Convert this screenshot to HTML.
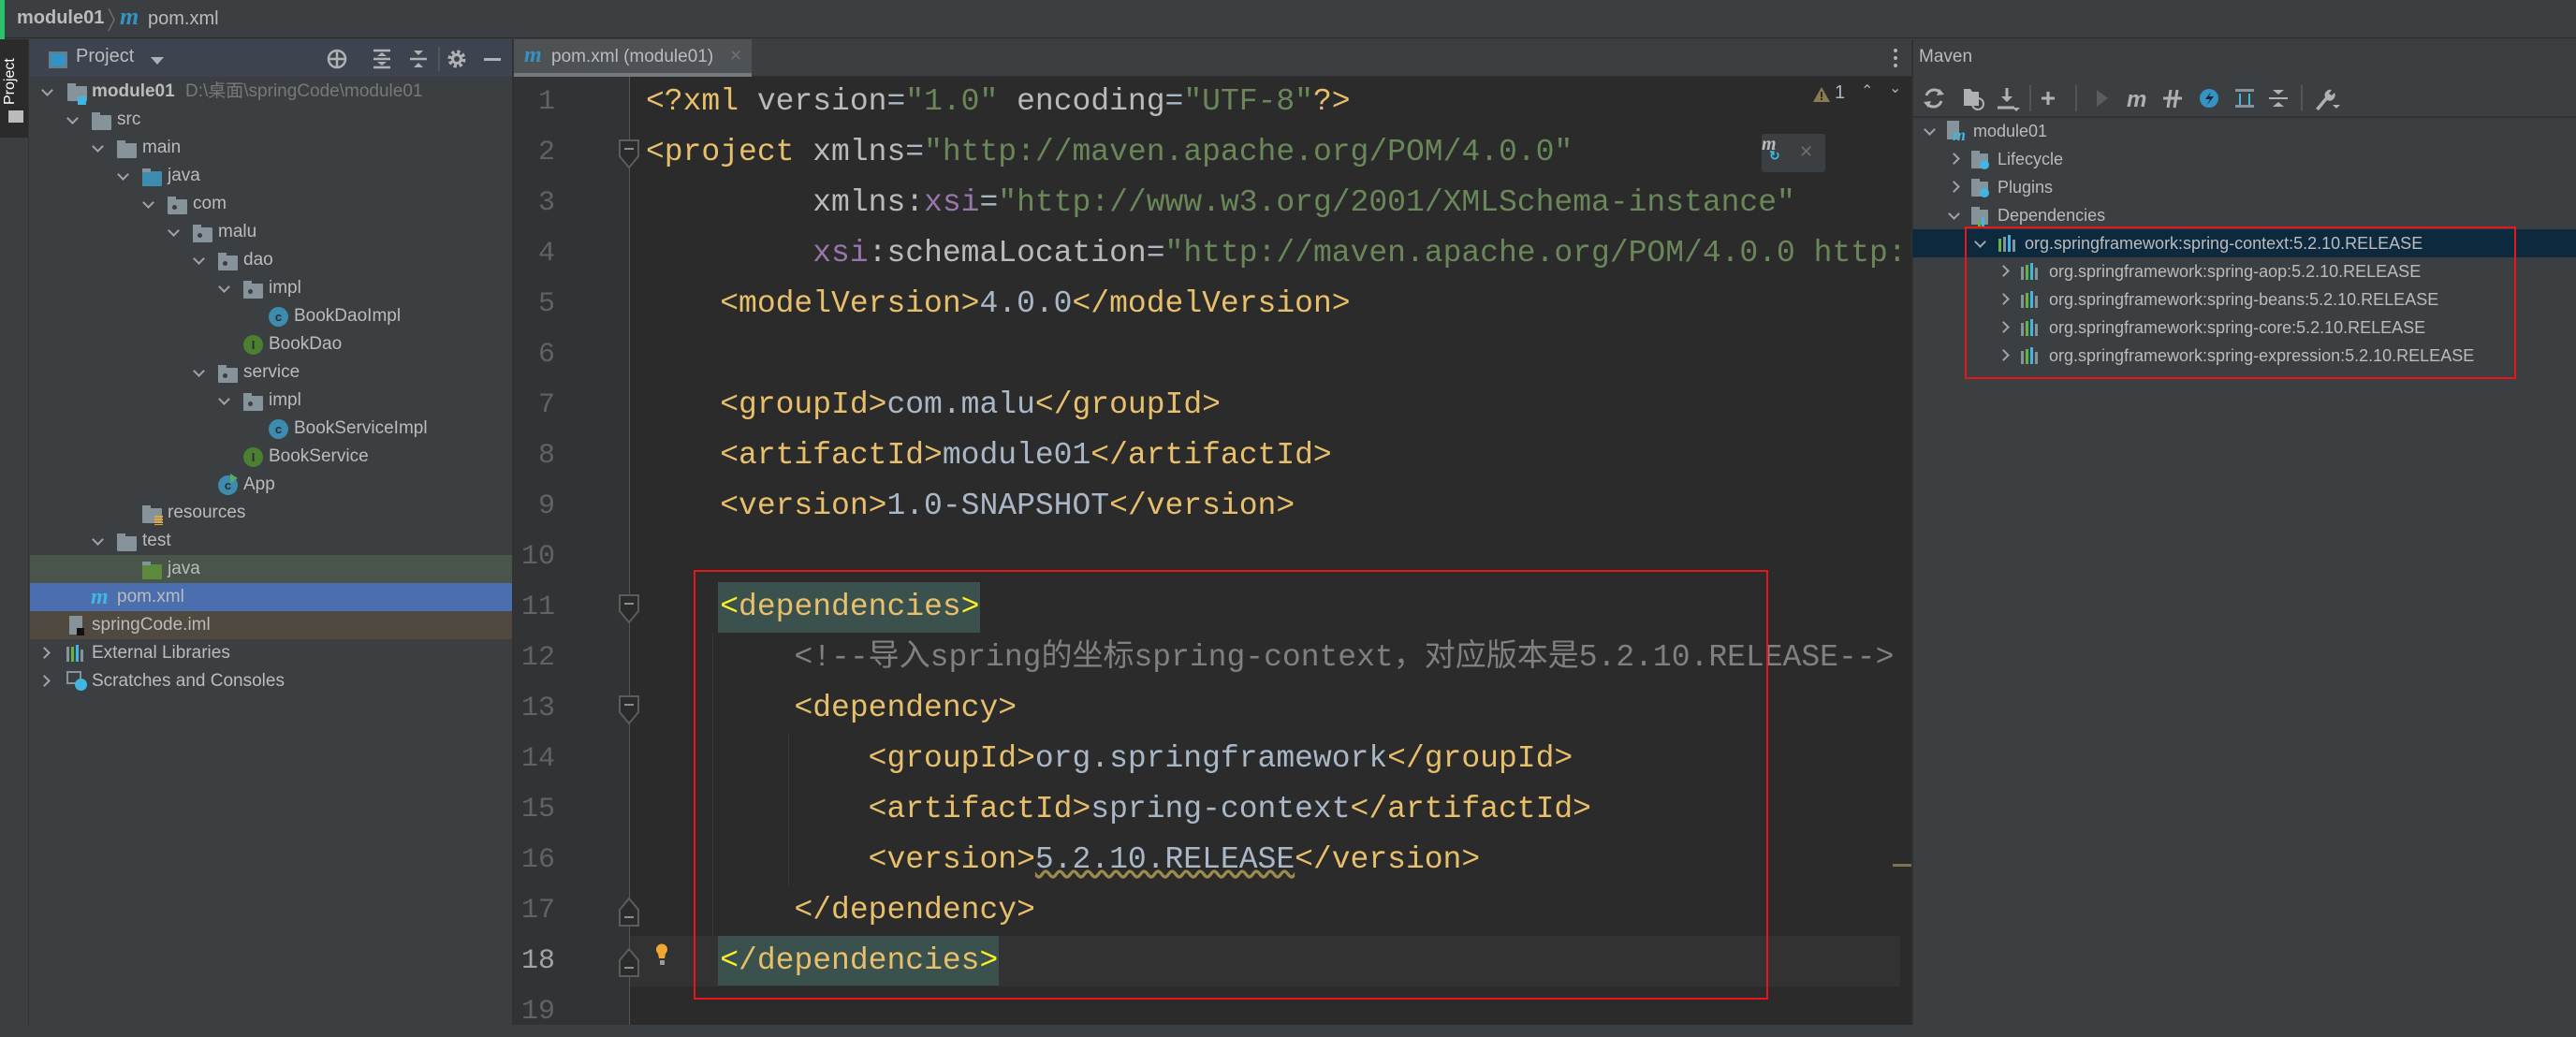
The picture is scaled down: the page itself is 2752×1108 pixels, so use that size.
<!DOCTYPE html>
<html><head><meta charset="utf-8">
<style>
*{margin:0;padding:0;box-sizing:border-box}
body{width:2752px;height:1095px;overflow:hidden;background:#3c3f41;position:relative;font-family:"Liberation Sans","Noto Sans CJK SC",sans-serif;color:#bbbbbb}
.a{position:absolute}
.row{position:absolute;left:32px;width:515px;height:30px;font-size:19px;line-height:30px;white-space:nowrap}
.chev{position:absolute;top:9px;width:9px;height:9px;border-right:2px solid #a0a4a8;border-bottom:2px solid #a0a4a8;transform:rotate(45deg)}
.chevr{position:absolute;top:10px;width:9px;height:9px;border-right:2px solid #a0a4a8;border-bottom:2px solid #a0a4a8;transform:rotate(-45deg)}
.fold{position:absolute;width:21px;height:16px;background:#87939a;border-radius:1px}
.fold:before{content:"";position:absolute;left:0;top:-3px;width:9px;height:4px;background:#87939a}
.pk:after{content:"";position:absolute;left:5px;top:6px;width:5px;height:5px;border-radius:50%;background:#3c3f41}
.ci{position:absolute;width:21px;height:21px;border-radius:50%;font-size:13px;line-height:21px;text-align:center;color:#2b2b2b;font-weight:bold}
.code{position:absolute;left:690px;font-family:"Liberation Mono","Noto Sans CJK SC",monospace;font-size:33px;line-height:54px;white-space:pre;color:#a9b7c6}
.ln{position:absolute;left:547px;width:46px;text-align:right;font-family:"Liberation Mono",monospace;font-size:30px;line-height:54px;color:#606366}
.t{color:#e8bf6a}.v{color:#6a8759}.p{color:#9876aa}.c{color:#808080}.at{color:#bababa}
.mrow{position:absolute;left:2043px;width:709px;height:30px;font-size:18px;line-height:30px;white-space:nowrap;color:#bbbbbb}
.lib{position:absolute;width:22px;height:18px}
.lib i{position:absolute;bottom:0;width:3px}
</style></head><body>
<!-- top bar -->
<div class="a" style="left:0;top:0;width:2752px;height:41px;background:#3c3f41;border-bottom:1px solid #2b2b2b"></div>
<div class="a" style="left:0;top:0;width:5px;height:76px;background:#29c46c"></div>
<div class="a" style="left:18px;top:8px;font-size:20px;font-weight:bold;color:#bbbbbb">module01</div>
<svg class="a" style="left:114px;top:8px" width="10" height="26"><path d="M2 1 L8 13 L2 25" fill="none" stroke="#6a6d70" stroke-width="1.5"/></svg>
<div class="a" style="left:128px;top:3px;font-size:26px;font-style:italic;font-weight:bold;color:#3592c4;font-family:'Liberation Serif',serif">m</div>
<div class="a" style="left:158px;top:9px;font-size:20px;color:#bbbbbb">pom.xml</div>

<!-- left stripe -->
<div class="a" style="left:0;top:42px;width:31px;height:1053px;background:#3c3f41;border-right:1px solid #323232"></div>
<div class="a" style="left:0;top:42px;width:30px;height:105px;background:#2b2b2b"></div>
<div class="a" style="left:2px;transform:rotate(-90deg);transform-origin:left top;font-size:16px;color:#fff;width:70px;top:112px">Project</div>
<div class="a" style="left:9px;top:118px;width:16px;height:13px;background:#bbbbbb"></div>

<!-- project panel -->
<div class="a" style="left:32px;top:42px;width:515px;height:40px;background:#3d4450"></div>
<div class="a" style="left:52px;top:55px;width:20px;height:18px;border:2px solid #6e7a85;background:#3592c4"></div>
<div class="a" style="left:81px;top:49px;font-size:20px;color:#bbbbbb">Project</div>
<div class="a" style="left:161px;top:61px;width:0;height:0;border-left:7px solid transparent;border-right:7px solid transparent;border-top:8px solid #afb1b3"></div>
<svg class="a" style="left:345px;top:48px" width="200" height="30" viewBox="0 0 200 30">
<g stroke="#afb1b3" stroke-width="2.5" fill="none"><circle cx="15" cy="15" r="9"/><line x1="15" y1="5" x2="15" y2="25"/><line x1="5" y1="15" x2="25" y2="15"/>
<line x1="54" y1="6" x2="72" y2="6"/><line x1="54" y1="24" x2="72" y2="24"/><line x1="54" y1="15" x2="72" y2="15"/>
<line x1="93" y1="15" x2="111" y2="15"/></g>
<g fill="#afb1b3"><path d="M58 12 L63 8 L68 12Z M58 18 L63 22 L68 18Z"/><path d="M97 6 L102 11 L107 6Z M97 24 L102 19 L107 24Z"/><rect x="172" y="14" width="18" height="3"/></g>
<line x1="124" y1="2" x2="124" y2="28" stroke="#555" stroke-width="2"/>
<circle cx="143" cy="15" r="7" fill="none" stroke="#afb1b3" stroke-width="5" stroke-dasharray="3 2.5"/><circle cx="143" cy="15" r="6" fill="#afb1b3"/><circle cx="143" cy="15" r="3" fill="#3d4450"/>
</svg>
<div class="a" style="left:547px;top:42px;width:2px;height:1053px;background:#323232"></div>

<!-- tree rows -->
<div class="row" style="top:83px"><span class="chev" style="left:14px"></span><span class="fold" style="left:40px;top:9px"></span><span class="a" style="left:51px;top:20px;width:9px;height:9px;background:#40b6e0"></span><b style="position:absolute;left:66px">module01</b><span style="position:absolute;left:166px;color:#787878">D:\桌面\springCode\module01</span></div>
<div class="row" style="top:113px"><span class="chev" style="left:41px"></span><span class="fold" style="left:66px;top:10px"></span><span style="position:absolute;left:93px">src</span></div>
<div class="row" style="top:143px"><span class="chev" style="left:68px"></span><span class="fold" style="left:93px;top:10px"></span><span style="position:absolute;left:120px">main</span></div>
<div class="row" style="top:173px"><span class="chev" style="left:95px"></span><span class="fold" style="left:120px;top:10px;background:#3d8cb0"></span><span style="position:absolute;left:147px">java</span></div>
<div class="row" style="top:203px"><span class="chev" style="left:122px"></span><span class="fold pk" style="left:147px;top:10px"></span><span style="position:absolute;left:174px">com</span></div>
<div class="row" style="top:233px"><span class="chev" style="left:149px"></span><span class="fold pk" style="left:174px;top:10px"></span><span style="position:absolute;left:201px">malu</span></div>
<div class="row" style="top:263px"><span class="chev" style="left:176px"></span><span class="fold pk" style="left:201px;top:10px"></span><span style="position:absolute;left:228px">dao</span></div>
<div class="row" style="top:293px"><span class="chev" style="left:203px"></span><span class="fold pk" style="left:228px;top:10px"></span><span style="position:absolute;left:255px">impl</span></div>
<div class="row" style="top:323px"><span class="ci" style="left:255px;top:5px;background:#3d8cb0">c</span><span style="position:absolute;left:282px">BookDaoImpl</span></div>
<div class="row" style="top:353px"><span class="ci" style="left:228px;top:5px;background:#4b8033">I</span><span style="position:absolute;left:255px">BookDao</span></div>
<div class="row" style="top:383px"><span class="chev" style="left:176px"></span><span class="fold pk" style="left:201px;top:10px"></span><span style="position:absolute;left:228px">service</span></div>
<div class="row" style="top:413px"><span class="chev" style="left:203px"></span><span class="fold pk" style="left:228px;top:10px"></span><span style="position:absolute;left:255px">impl</span></div>
<div class="row" style="top:443px"><span class="ci" style="left:255px;top:5px;background:#3d8cb0">c</span><span style="position:absolute;left:282px">BookServiceImpl</span></div>
<div class="row" style="top:473px"><span class="ci" style="left:228px;top:5px;background:#4b8033">I</span><span style="position:absolute;left:255px">BookService</span></div>
<div class="row" style="top:503px"><span class="ci" style="left:201px;top:5px;background:#3d8cb0">c</span><span class="a" style="left:214px;top:3px;width:0;height:0;border-top:5px solid transparent;border-bottom:5px solid transparent;border-left:8px solid #59a869"></span><span style="position:absolute;left:228px">App</span></div>
<div class="row" style="top:533px"><span class="fold" style="left:120px;top:10px"></span><span class="a" style="left:133px;top:18px;width:9px;height:10px;background:repeating-linear-gradient(#e6a43c 0 2px,transparent 2px 3px)"></span><span style="position:absolute;left:147px">resources</span></div>
<div class="row" style="top:563px"><span class="chev" style="left:68px"></span><span class="fold" style="left:93px;top:10px"></span><span style="position:absolute;left:120px">test</span></div>
<div class="row" style="top:593px;background:#49544a"><span class="fold" style="left:120px;top:10px;background:#5b8a3c"></span><span style="position:absolute;left:147px">java</span></div>
<div class="row" style="top:623px;background:#4b6eaf"><span style="position:absolute;left:65px;font-family:'Liberation Serif',serif;font-style:italic;font-weight:bold;color:#40b6e0;font-size:24px">m</span><span style="position:absolute;left:93px">pom.xml</span></div>
<div class="row" style="top:653px;background:#4f493f"><span class="a" style="left:42px;top:5px;width:14px;height:20px;background:#87939a"></span><span class="a" style="left:50px;top:18px;width:8px;height:8px;background:#111"></span><span style="position:absolute;left:66px">springCode.iml</span></div>
<div class="row" style="top:683px"><span class="chevr" style="left:11px"></span><span class="lib" style="left:39px;top:6px"><i style="left:0;height:16px;background:#87939a"></i><i style="left:5px;height:16px;background:#62b543"></i><i style="left:10px;height:18px;background:#40b6e0"></i><i style="left:15px;height:13px;background:#87939a"></i></span><span style="position:absolute;left:66px">External Libraries</span></div>
<div class="row" style="top:713px"><span class="chevr" style="left:11px"></span><span class="a" style="left:39px;top:4px;width:16px;height:14px;border:2px solid #87939a"></span><span class="a" style="left:48px;top:12px;width:13px;height:13px;border-radius:50%;background:#40b6e0"></span><span style="position:absolute;left:66px">Scratches and Consoles</span></div>

<!-- editor -->
<div class="a" style="left:549px;top:42px;width:1493px;height:40px;background:#3c3f41;border-bottom:1px solid #323232"></div>
<div class="a" style="left:549px;top:42px;width:254px;height:40px;background:#4e5254;border-bottom:4px solid #747a80"></div>
<div class="a" style="left:560px;top:46px;font-family:'Liberation Serif',serif;font-style:italic;font-weight:bold;color:#3592c4;font-size:24px">m</div>
<div class="a" style="left:589px;top:50px;font-size:19px;color:#bbbbbb">pom.xml (module01)</div>
<div class="a" style="left:779px;top:50px;font-size:17px;color:#6e6e6e">✕</div>
<div class="a" style="left:2023px;top:52px;width:4px;height:4px;background:#afb1b3;border-radius:2px;box-shadow:0 8px 0 #afb1b3,0 16px 0 #afb1b3"></div>

<div class="a" style="left:549px;top:82px;width:1493px;height:1013px;background:#2b2b2b"></div>
<div class="a" style="left:549px;top:82px;width:123px;height:1013px;background:#313335"></div>
<div class="a" style="left:672px;top:82px;width:1px;height:1013px;background:#555"></div>
<div class="a" style="left:673px;top:1000px;width:1369px;height:54px;background:#323232"></div>

<!-- line numbers -->
<div class="ln" style="top:82px">1<br>2<br>3<br>4<br>5<br>6<br>7<br>8<br>9<br>10<br>11<br>12<br>13<br>14<br>15<br>16<br>17<br><span style="color:#a4a3a3">18</span><br>19</div>

<!-- fold markers -->
<svg class="a" style="left:660px;top:82px" width="60" height="1013">
<g fill="#2b2b2b" stroke="#5a5d60" stroke-width="2">
<path d="M2 68 H22 V85 L12 97 L2 85Z"/>
<path d="M2 554 H22 V571 L12 583 L2 571Z"/>
<path d="M2 662 H22 V679 L12 691 L2 679Z"/>
<path d="M2 890 L12 878 L22 890 V907 H2Z"/>
<path d="M2 944 L12 932 L22 944 V961 H2Z"/>
</g>
<g stroke="#8a8d90" stroke-width="2"><line x1="7" y1="77" x2="17" y2="77"/><line x1="7" y1="563" x2="17" y2="563"/><line x1="7" y1="671" x2="17" y2="671"/><line x1="7" y1="898" x2="17" y2="898"/><line x1="7" y1="952" x2="17" y2="952"/></g>
<path d="M43 937 a6 6 0 1 1 8 0 l-1 5 h-6z" fill="#f0a732"/><rect x="45" y="944" width="5" height="5" fill="#999"/>
</svg>

<!-- tag highlight -->
<div class="a" style="left:767px;top:622px;width:280px;height:54px;background:#3b514d"></div>
<div class="a" style="left:767px;top:1000px;width:300px;height:53px;background:#3b514d"></div>
<div class="a" style="left:761px;top:676px;width:1px;height:324px;background:#3a3a3a"></div>
<div class="a" style="left:842px;top:784px;width:1px;height:162px;background:#3a3a3a"></div>

<div class="code" style="top:82px"><span class="t">&lt;?xml </span><span class="at">version</span>=<span class="v">"1.0"</span> <span class="at">encoding</span>=<span class="v">"UTF-8"</span><span class="t">?&gt;</span>
<span class="t">&lt;project </span><span class="at">xmlns</span>=<span class="v">"http://maven.apache.org/POM/4.0.0"</span>
         <span class="at">xmlns:</span><span class="p">xsi</span>=<span class="v">"http://www.w3.org/2001/XMLSchema-instance"</span>
         <span class="p">xsi</span><span class="at">:schemaLocation</span>=<span class="v">"http://maven.apache.org/POM/4.0.0 http:</span>
    <span class="t">&lt;modelVersion&gt;</span>4.0.0<span class="t">&lt;/modelVersion&gt;</span>

    <span class="t">&lt;groupId&gt;</span>com.malu<span class="t">&lt;/groupId&gt;</span>
    <span class="t">&lt;artifactId&gt;</span>module01<span class="t">&lt;/artifactId&gt;</span>
    <span class="t">&lt;version&gt;</span>1.0-SNAPSHOT<span class="t">&lt;/version&gt;</span>

    <span class="t"><span style="color:#ffef28">&lt;</span>dependencies<span style="color:#ffef28">&gt;</span></span>
        <span class="c">&lt;!--导入spring的坐标spring-context，对应版本是5.2.10.RELEASE--&gt;</span>
        <span class="t">&lt;dependency&gt;</span>
            <span class="t">&lt;groupId&gt;</span>org.springframework<span class="t">&lt;/groupId&gt;</span>
            <span class="t">&lt;artifactId&gt;</span>spring-context<span class="t">&lt;/artifactId&gt;</span>
            <span class="t">&lt;version&gt;</span><span style="text-decoration:underline wavy #9e8a4c">5.2.10.RELEASE</span><span class="t">&lt;/version&gt;</span>
        <span class="t">&lt;/dependency&gt;</span>
    <span class="t"><span style="color:#ffef28">&lt;</span>/dependencies<span style="color:#ffef28">&gt;</span></span>
</div>
<div class="a" style="left:2030px;top:82px;width:12px;height:1013px;background:#2b2b2b"></div>
<div class="a" style="left:2022px;top:923px;width:20px;height:3px;background:#7b7350"></div>

<!-- warnings -->
<svg class="a" style="left:1936px;top:92px" width="20" height="18"><path d="M10 1 L19 17 H1Z" fill="#8c7a4f"/><rect x="9" y="6" width="2" height="6" fill="#2b2b2b"/><rect x="9" y="13" width="2" height="2" fill="#2b2b2b"/></svg>
<div class="a" style="left:1960px;top:88px;font-size:20px;color:#a9b7c6">1</div>
<div class="a" style="left:1988px;top:87px;font-size:16px;color:#afb1b3">&#8963;</div>
<div class="a" style="left:2018px;top:84px;font-size:16px;color:#afb1b3">&#8964;</div>
<div class="a" style="left:1882px;top:143px;width:68px;height:41px;background:#3c3f41;border-radius:3px"></div>
<div class="a" style="left:1882px;top:143px;font-family:'Liberation Serif',serif;font-style:italic;font-weight:bold;color:#bbbbbb;font-size:20px">m</div>
<div class="a" style="left:1890px;top:158px;font-size:14px;color:#40b6e0;font-weight:bold">↻</div>
<div class="a" style="left:1922px;top:152px;font-size:18px;color:#6e6e6e">✕</div>

<!-- red box editor -->
<div class="a" style="left:741px;top:609px;width:1148px;height:459px;border:2px solid #e8161b"></div>

<!-- maven panel -->
<div class="a" style="left:2042px;top:42px;width:2px;height:1053px;background:#323232"></div>
<div class="a" style="left:2050px;top:50px;font-size:19px;color:#bbbbbb">Maven</div>
<div class="a" style="left:2044px;top:124px;width:708px;height:2px;background:#323232"></div>
<svg class="a" style="left:2044px;top:88px" width="470" height="34">
<g fill="none" stroke="#afb1b3" stroke-width="3"><path d="M30 12 A9 9 0 0 0 14 14"/><path d="M14 22 A9 9 0 0 0 30 20"/></g>
<path d="M28 7 L33 13 L25 14Z M16 27 L11 21 L19 20Z" fill="#afb1b3"/>
<path d="M54 7 H61 L63 10 H70 V25 H54Z" fill="#afb1b3"/><circle cx="69" cy="23" r="6" fill="none" stroke="#afb1b3" stroke-width="2"/>
<g stroke="#afb1b3" stroke-width="3"><line x1="100" y1="6" x2="100" y2="20"/><line x1="90" y1="27" x2="108" y2="27"/><line x1="144" y1="10" x2="144" y2="24"/><line x1="137" y1="17" x2="151" y2="17"/></g>
<path d="M94 15 L100 21 L106 15Z M106 27 L114 27 L110 31Z" fill="#afb1b3"/>
<line x1="125" y1="3" x2="125" y2="31" stroke="#555" stroke-width="2"/><line x1="174" y1="3" x2="174" y2="31" stroke="#555" stroke-width="2"/>
<path d="M196 8 L208 17 L196 26Z" fill="#5a5d5f"/>
<text x="228" y="26" font-family="Liberation Sans" font-size="24" font-style="italic" font-weight="bold" fill="#afb1b3">m</text>
<g stroke="#afb1b3" stroke-width="3"><line x1="267" y1="17" x2="287" y2="17"/><line x1="275" y1="8" x2="272" y2="27"/><line x1="282" y1="8" x2="279" y2="27"/></g>
<circle cx="316" cy="17" r="10" fill="#3592c4"/><path d="M318 10 L312 18 H317 L314 24 L321 15 H316Z" fill="#1c2a35"/>
<rect x="344" y="7" width="20" height="3" fill="#87939a"/><rect x="344" y="24" width="20" height="3" fill="#87939a"/><g stroke="#40b6e0" stroke-width="2"><line x1="349" y1="12" x2="349" y2="24"/><line x1="359" y1="12" x2="359" y2="24"/></g>
<g fill="#afb1b3"><rect x="380" y="16" width="20" height="2"/><path d="M384 8 L390 13 L396 8Z M384 26 L390 21 L396 26Z"/></g>
<line x1="415" y1="3" x2="415" y2="31" stroke="#555" stroke-width="2"/>
<path d="M430 28 L440 16 A6 6 0 0 1 447 8 L444 12 L447 14 L450 11 A6 6 0 0 1 442 19 L433 30Z" fill="#afb1b3"/><path d="M448 24 L456 24 L452 28Z" fill="#afb1b3"/>
</svg>

<div class="mrow" style="top:125px"><span class="chev" style="left:14px"></span><span class="a" style="left:37px;top:4px;width:13px;height:20px;background:#87939a"></span><span style="position:absolute;left:43px;top:4px;font-family:'Liberation Serif',serif;font-style:italic;font-weight:bold;color:#40b6e0;font-size:18px">m</span><span style="position:absolute;left:65px">module01</span></div>
<div class="mrow" style="top:155px"><span class="chevr" style="left:40px"></span><span class="fold" style="left:63px;top:9px;width:18px"></span><span class="a" style="left:72px;top:16px;width:10px;height:10px;border-radius:50%;background:#40b6e0"></span><span style="position:absolute;left:91px">Lifecycle</span></div>
<div class="mrow" style="top:185px"><span class="chevr" style="left:40px"></span><span class="fold" style="left:63px;top:9px;width:18px"></span><span class="a" style="left:72px;top:16px;width:10px;height:10px;border-radius:50%;background:#40b6e0"></span><span style="position:absolute;left:91px">Plugins</span></div>
<div class="mrow" style="top:215px"><span class="chev" style="left:40px"></span><span class="fold" style="left:63px;top:9px;width:18px"></span><span class="lib" style="left:70px;top:11px"><i style="left:0;height:8px;background:#62b543"></i><i style="left:4px;height:12px;background:#40b6e0"></i></span><span style="position:absolute;left:91px">Dependencies</span></div>
<div class="mrow" style="top:245px;background:#0d293e;height:30px"><span class="chev" style="left:68px"></span><span class="lib" style="left:92px;top:6px"><i style="left:0;height:14px;background:#62b543"></i><i style="left:5px;height:16px;background:#87939a"></i><i style="left:10px;height:18px;background:#40b6e0"></i><i style="left:15px;height:13px;background:#87939a"></i></span><span style="position:absolute;left:120px">org.springframework:spring-context:5.2.10.RELEASE</span></div>
<div class="mrow" style="top:275px"><span class="chevr" style="left:93px"></span><span class="lib" style="left:116px;top:6px"><i style="left:0;height:14px;background:#87939a"></i><i style="left:5px;height:16px;background:#62b543"></i><i style="left:10px;height:18px;background:#40b6e0"></i><i style="left:15px;height:13px;background:#87939a"></i></span><span style="position:absolute;left:146px">org.springframework:spring-aop:5.2.10.RELEASE</span></div>
<div class="mrow" style="top:305px"><span class="chevr" style="left:93px"></span><span class="lib" style="left:116px;top:6px"><i style="left:0;height:14px;background:#87939a"></i><i style="left:5px;height:16px;background:#62b543"></i><i style="left:10px;height:18px;background:#40b6e0"></i><i style="left:15px;height:13px;background:#87939a"></i></span><span style="position:absolute;left:146px">org.springframework:spring-beans:5.2.10.RELEASE</span></div>
<div class="mrow" style="top:335px"><span class="chevr" style="left:93px"></span><span class="lib" style="left:116px;top:6px"><i style="left:0;height:14px;background:#87939a"></i><i style="left:5px;height:16px;background:#62b543"></i><i style="left:10px;height:18px;background:#40b6e0"></i><i style="left:15px;height:13px;background:#87939a"></i></span><span style="position:absolute;left:146px">org.springframework:spring-core:5.2.10.RELEASE</span></div>
<div class="mrow" style="top:365px"><span class="chevr" style="left:93px"></span><span class="lib" style="left:116px;top:6px"><i style="left:0;height:14px;background:#87939a"></i><i style="left:5px;height:16px;background:#62b543"></i><i style="left:10px;height:18px;background:#40b6e0"></i><i style="left:15px;height:13px;background:#87939a"></i></span><span style="position:absolute;left:146px">org.springframework:spring-expression:5.2.10.RELEASE</span></div>
<div class="a" style="left:2099px;top:242px;width:589px;height:163px;border:2px solid #e8161b"></div>
</body></html>
